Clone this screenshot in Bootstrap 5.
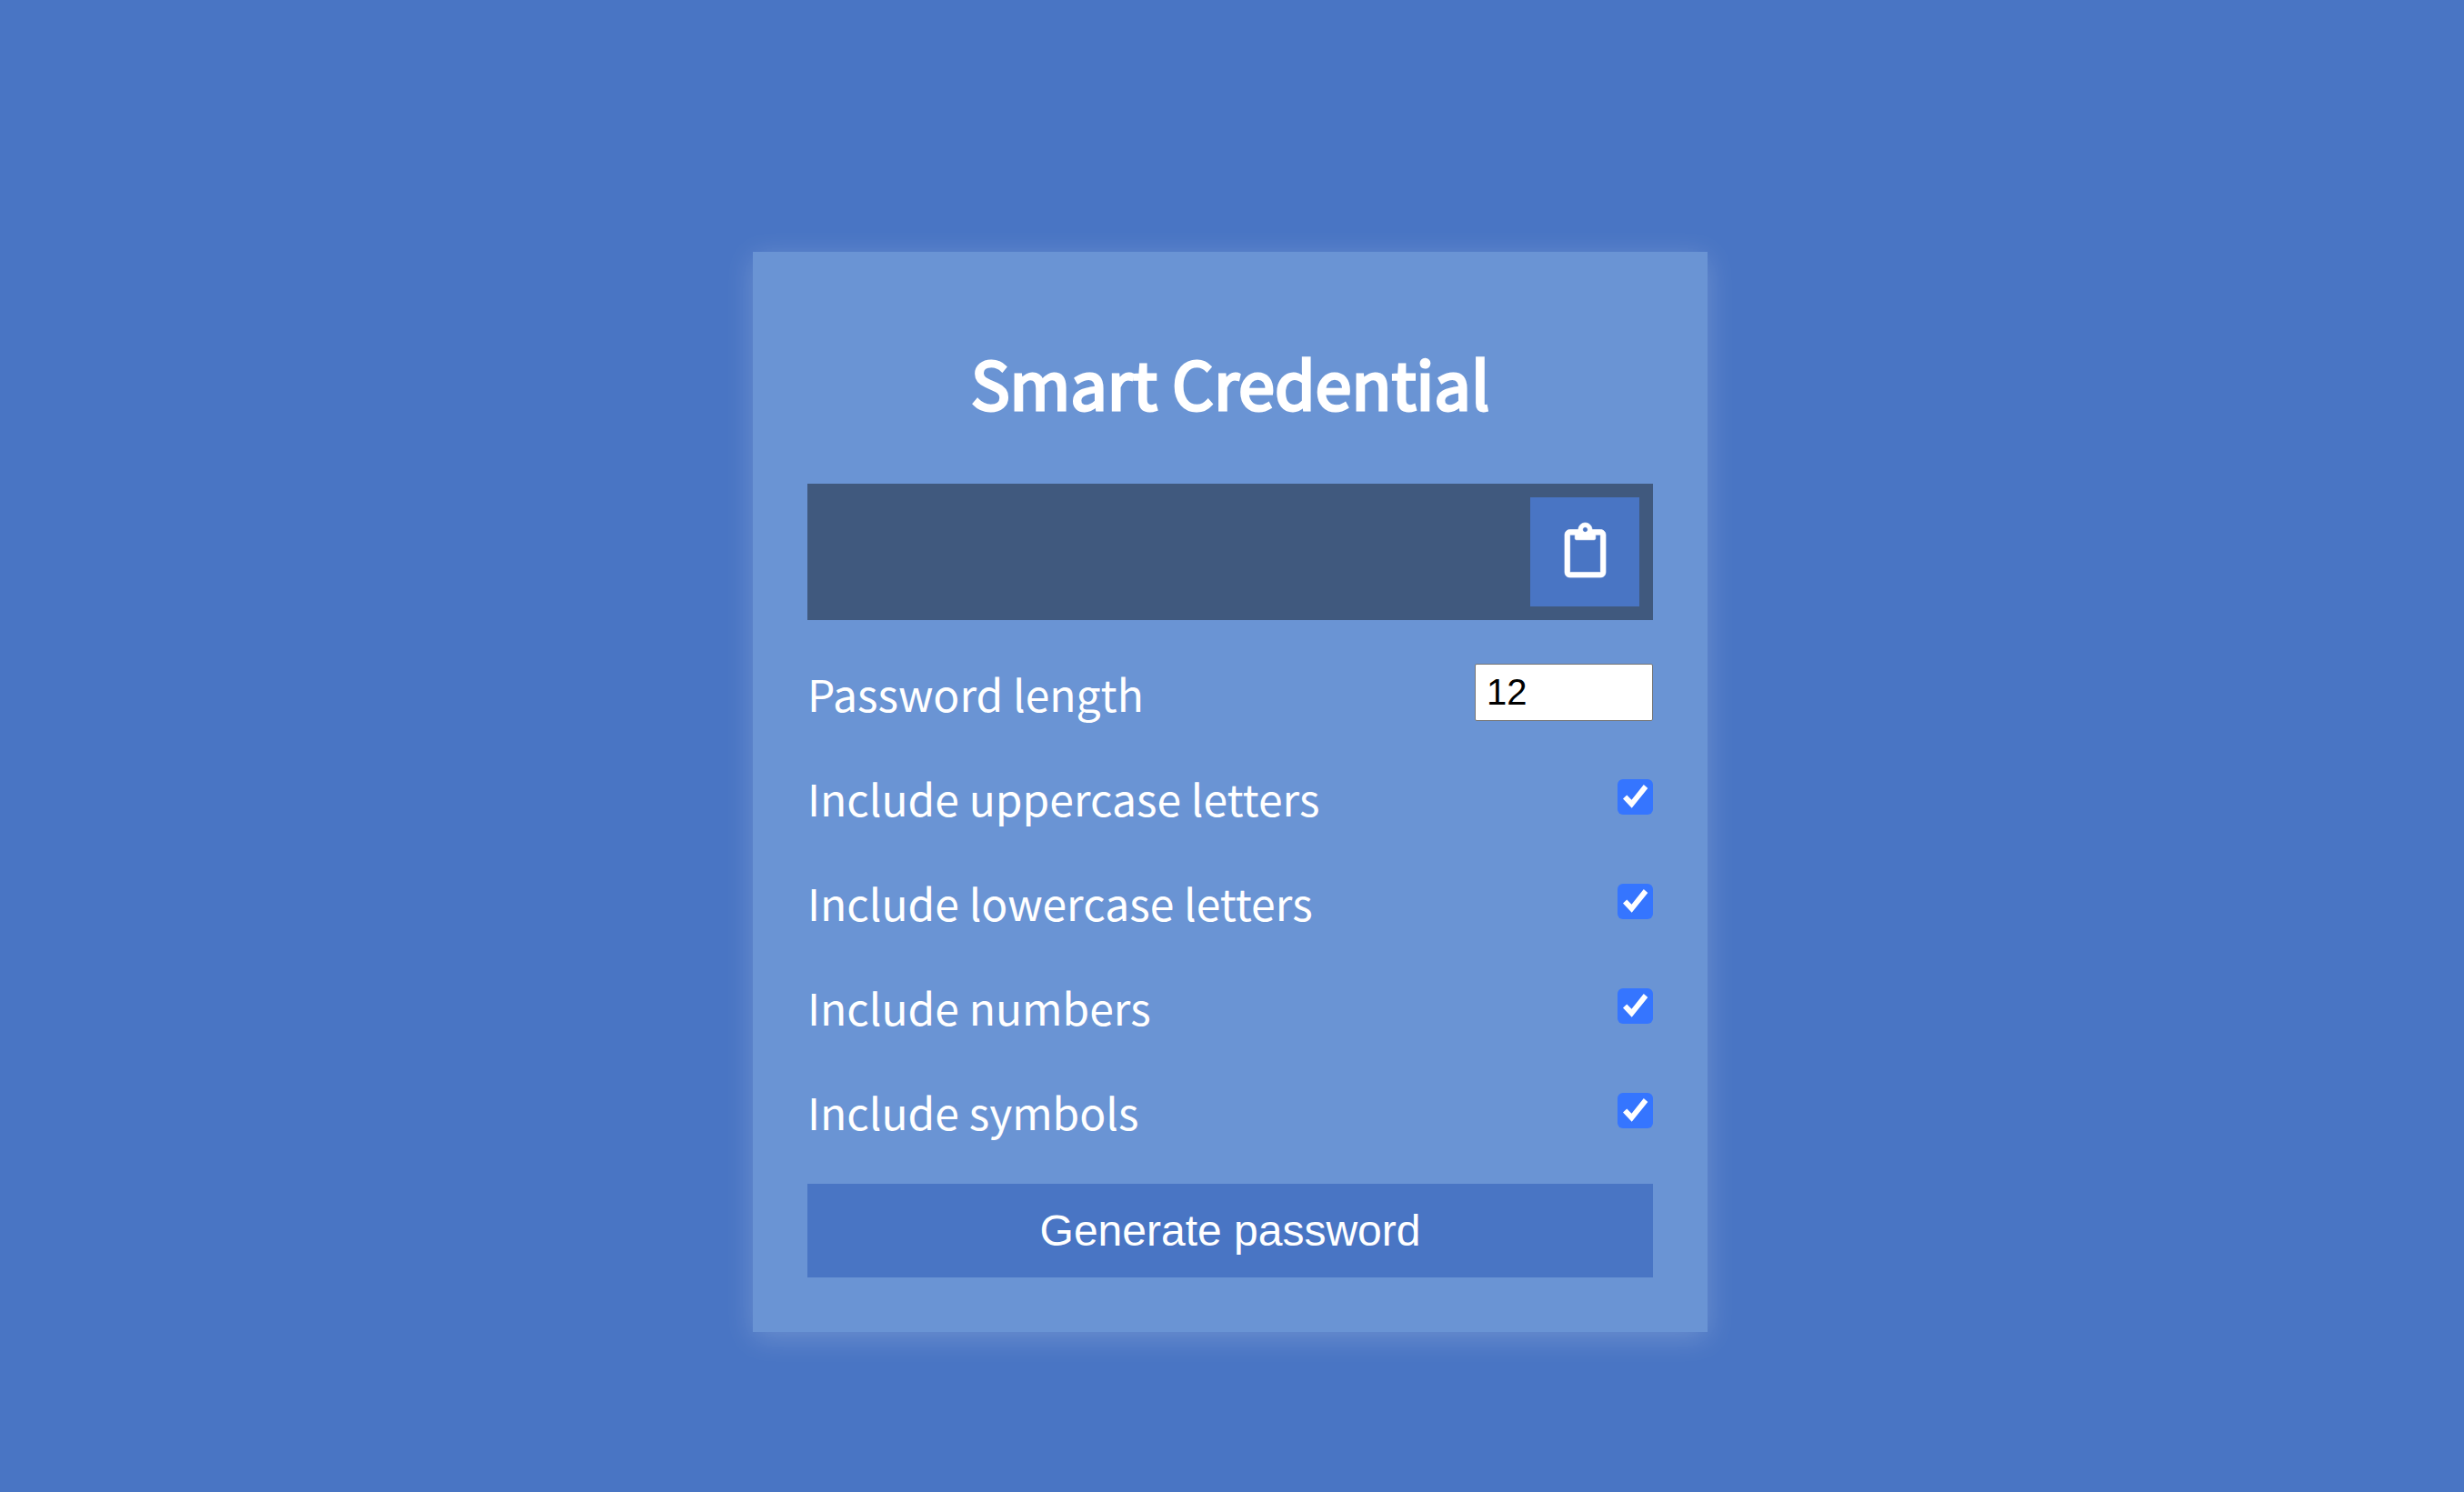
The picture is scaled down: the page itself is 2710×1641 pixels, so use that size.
<!DOCTYPE html>
<html lang="en">
<head>
<meta charset="utf-8">
<meta name="viewport" content="width=device-width, initial-scale=1">
<title>Smart Credential</title>
<link href="https://cdn.jsdelivr.net/npm/bootstrap@5.3.0/dist/css/bootstrap.min.css" rel="stylesheet">
<style>
  body {
    background: #4975c4;
    color: #fff;
    font-family: "Noto Sans CJK JP", "Noto Sans", sans-serif;
    font-size: 48px;
    line-height: 70px;
    padding-top: 100px;
  }
  .generator {
    width: 1050px;
    max-width: 100%;
    padding: 60px;
    background: #6a94d4;
    box-shadow: 0 6px 30px rgba(255, 255, 255, .2);
  }
  .generator-title {
    font-size: 72px;
    font-weight: 400;
    line-height: 105px;
    margin: 30px 0 60px;
    -webkit-text-stroke: 3px #fff;
  }
  .result-box {
    background: #40597e;
    padding: 15px;
    min-height: 150px;
    margin-bottom: 45px;
  }
  .brand-btn,
  .brand-btn:hover {
    background: #4975c4;
    color: #fff;
    font-family: "Liberation Sans", Arial, sans-serif;
  }
  .copy-btn { width: 120px; height: 120px; }
  .copy-btn svg { overflow: visible; }
  .settings { gap: 45px; margin-bottom: 45px; }
  .length-input {
    width: 196px;
    height: 63px;
    padding: 0 12px;
    border: 1px solid #767676;
    border-radius: 2px;
    background: #fff;
    color: #000;
    font: 40px "Liberation Sans", Arial, sans-serif;
    appearance: textfield;
  }
  .length-input::-webkit-inner-spin-button { display: none; }
  .generator .form-check-input {
    width: 39px;
    height: 39px;
    border: 0;
    border-radius: 6px;
  }
  .generator .form-check-input:checked {
    background-color: #3575ff;
    background-image: url("data:image/svg+xml,%3Csvg xmlns='http://www.w3.org/2000/svg' viewBox='0 0 39 39'%3E%3Cpath fill='%23fff' d='M6 21.5l4.300-3.900 5.200 5.200L28.800 6l4.500 4L15.700 31.700z'/%3E%3C/svg%3E");
  }
  .generate-btn { font-size: 48px; line-height: 55px; padding: 24px; }
</style>
</head>
<body class="min-vh-100 d-flex align-items-center justify-content-center pe-1">
<main class="generator">
  <h2 class="generator-title text-center">Smart Credential</h2>
  <div class="result-box d-flex align-items-center justify-content-end">
    <output class="flex-grow-1 text-break" id="result"></output>
    <button type="button" class="btn brand-btn copy-btn rounded-0 border-0 p-0 pb-1 d-flex align-items-center justify-content-center" aria-label="Copy to clipboard">
      <svg width="45" height="60" viewBox="0 0 384 512" fill="currentColor" stroke="currentColor" stroke-width="6" aria-hidden="true"><path d="M336 64h-80c0-35.300-28.700-64-64-64s-64 28.700-64 64H48C21.500 64 0 85.500 0 112v352c0 26.500 21.500 48 48 48h288c26.500 0 48-21.500 48-48V112c0-26.500-21.500-48-48-48zM192 40c13.300 0 24 10.700 24 24s-10.700 24-24 24-24-10.700-24-24 10.700-24 24-24zm144 418c0 3.300-2.700 6-6 6H54c-3.300 0-6-2.700-6-6V118c0-3.300 2.700-6 6-6h42v36c0 6.600 5.400 12 12 12h168c6.600 0 12-5.400 12-12v-36h42c3.300 0 6 2.700 6 6z"/></svg>
    </button>
  </div>
  <div class="settings d-flex flex-column">
    <div class="d-flex justify-content-between align-items-center">
      <label for="length">Password length</label>
      <input type="number" class="length-input" id="length" min="4" max="20" value="12">
    </div>
    <div class="d-flex justify-content-between align-items-center">
      <label for="uppercase">Include uppercase letters</label>
      <input type="checkbox" class="form-check-input m-0" id="uppercase" checked>
    </div>
    <div class="d-flex justify-content-between align-items-center">
      <label for="lowercase">Include lowercase letters</label>
      <input type="checkbox" class="form-check-input m-0" id="lowercase" checked>
    </div>
    <div class="d-flex justify-content-between align-items-center">
      <label for="numbers">Include numbers</label>
      <input type="checkbox" class="form-check-input m-0" id="numbers" checked>
    </div>
    <div class="d-flex justify-content-between align-items-center">
      <label for="symbols">Include symbols</label>
      <input type="checkbox" class="form-check-input m-0" id="symbols" checked>
    </div>
  </div>
  <button type="button" class="btn brand-btn generate-btn w-100 rounded-0 border-0">Generate password</button>
</main>
<script src="https://cdn.jsdelivr.net/npm/bootstrap@5.3.0/dist/js/bootstrap.bundle.min.js"></script>
</body>
</html>
